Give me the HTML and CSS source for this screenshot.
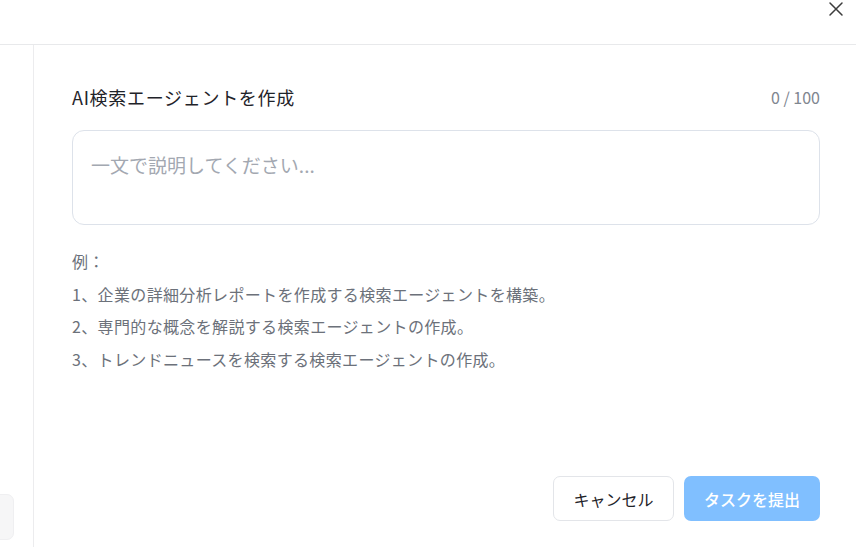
FILE: index.html
```html
<!DOCTYPE html>
<html lang="ja">
<head>
<meta charset="utf-8">
<title>AI検索エージェントを作成</title>
<link rel="stylesheet" href="styles.css">
</head>
<body>
<div class="app">
  <header class="topbar">
    <button class="close" aria-label="閉じる">
      <svg width="16" height="16" viewBox="0 0 16 16"><path d="M2 2L14 14M14 2L2 14" stroke="#3c3c3c" stroke-width="1.5" stroke-linecap="round"/></svg>
    </button>
  </header>
  <div class="body">
    <aside class="sidebar">
      <div class="side-item"></div>
    </aside>
    <main class="main">
      <div class="title-row">
        <h1 class="title">AI検索エージェントを作成</h1>
        <span class="counter">0 / 100</span>
      </div>
      <div class="input-box">
        <span class="placeholder">一文で説明してください...</span>
      </div>
      <div class="examples">
        <p>例：</p>
        <p>1、企業の詳細分析レポートを作成する検索エージェントを構築。</p>
        <p>2、専門的な概念を解説する検索エージェントの作成。</p>
        <p>3、トレンドニュースを検索する検索エージェントの作成。</p>
      </div>
      <div class="actions">
        <button class="btn btn-cancel">キャンセル</button>
        <button class="btn btn-submit">タスクを提出</button>
      </div>
    </main>
  </div>
</div>
</body>
</html>
```

FILE: styles.css
```css
* { box-sizing: border-box; }
html, body { margin: 0; padding: 0; background: #fff; }
body {
  font-family: "Noto Sans CJK JP", "Noto Sans", sans-serif;
  color: #1f2329;
  width: 856px;
  height: 547px;
  overflow: hidden;
}
.app { display: flex; flex-direction: column; height: 547px; }
.topbar {
  height: 45px;
  border-bottom: 1px solid #e8e9eb;
  display: flex;
  justify-content: flex-end;
  align-items: flex-start;
  flex-shrink: 0;
}
.close {
  border: 0;
  background: none;
  padding: 0;
  margin: 1px 12px 0 0;
  width: 16px;
  height: 16px;
  display: flex;
  cursor: pointer;
}
.body { flex: 1; display: flex; min-height: 0; }
.sidebar {
  width: 34px;
  flex-shrink: 0;
  border-right: 1px solid #ececee;
  display: flex;
  flex-direction: column;
  justify-content: flex-end;
  padding-bottom: 7px;
  overflow: hidden;
}
.side-item {
  width: 44px;
  height: 46px;
  margin-left: -30px;
  background: #f6f6f7;
  border: 1px solid #efeff1;
  border-radius: 7px;
}
.main {
  flex: 1;
  display: flex;
  flex-direction: column;
  padding: 39px 36px 26px 38px;
}
.title-row {
  display: flex;
  justify-content: space-between;
  align-items: center;
  height: 26px;
}
.title {
  margin: 0;
  font-size: 18px;
  font-weight: 400;
  letter-spacing: 0.7px;
  color: #1f2329;
}
.counter {
  font-size: 16px;
  color: #80868f;
}
.input-box {
  margin-top: 20px;
  height: 95px;
  border: 1px solid #dde2ea;
  border-radius: 12px;
  padding: 20px 18px;
}
.placeholder {
  font-size: 19px;
  color: #a3a8b1;
  line-height: 28px;
}
.examples {
  margin-top: 20px;
  font-size: 16px;
  letter-spacing: 0.35px;
  color: #6c717a;
}
.examples p {
  margin: 0;
  line-height: 32.5px;
}
.actions {
  margin-top: auto;
  display: flex;
  justify-content: flex-end;
  gap: 10px;
}
.btn {
  height: 45px;
  border-radius: 7px;
  font-family: "Noto Sans CJK JP", sans-serif;
  font-size: 16px;
  padding: 0 19px;
  cursor: pointer;
}
.btn-cancel {
  background: #fff;
  border: 1px solid #e3e5e9;
  color: #1f2329;
  width: 121px;
}
.btn-submit {
  background: #80bfff;
  border: 0;
  color: #fff;
  font-weight: 500;
  width: 136px;
}
```
